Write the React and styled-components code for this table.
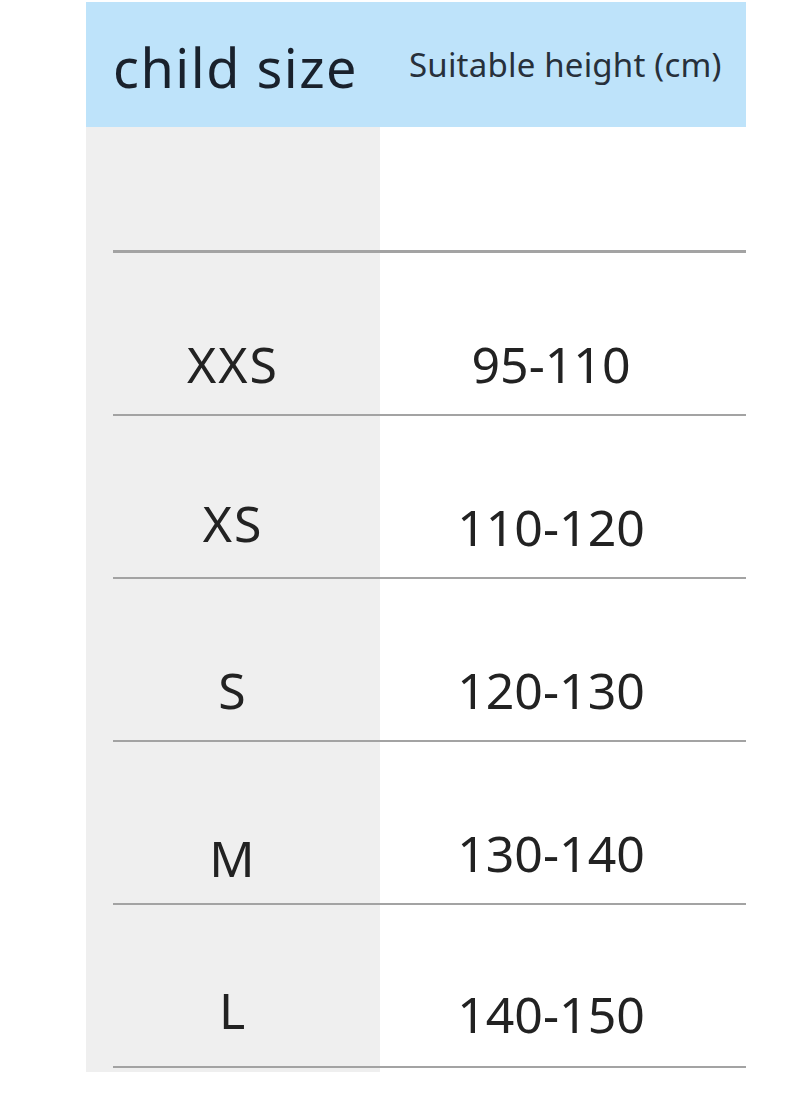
import React from "react"
import styled, { createGlobalStyle } from "styled-components"

const GlobalStyle = createGlobalStyle`
  html, body {
    margin: 0;
    padding: 0;
    background: #ffffff;
  }
  body {
    font-family: "Noto Sans", "Open Sans", sans-serif;
  }
`

const Page = styled.div`
  width: 798px;
  min-height: 1093px;
  padding-top: 2px;
  box-sizing: border-box;
`

const Table = styled.div`
  margin-left: 86px;
  width: 660px;
`

const Header = styled.div`
  display: grid;
  grid-template-columns: 294px 366px;
  height: 125px;
  background-color: #bee3fa;
`

const HeadCell = styled.div`
  display: flex;
  align-items: center;
  padding-left: ${props => props.$indent}px;
  padding-top: ${props => props.$drop}px;
  font-size: ${props => props.$size}px;
  color: ${props => props.$color};
  letter-spacing: ${props => props.$spacing || 0}px;
  white-space: nowrap;
`

const Body = styled.div`
  background: linear-gradient(to right, #efefef 294px, #ffffff 294px);
  padding-bottom: 4px;
`

const Row = styled.div`
  display: grid;
  grid-template-columns: 267px 366px;
  margin-left: 27px;
  height: ${props => props.$height}px;
  border-bottom: ${props => props.$line}px solid #a3a3a3;
  box-sizing: border-box;
`

const Cell = styled.div`
  display: flex;
  align-items: flex-end;
  justify-content: center;
  padding-right: ${props => props.$shift}px;
  padding-bottom: ${props => props.$bottom}px;
  font-size: 50px;
  line-height: 1;
  letter-spacing: ${props => props.$spacing || 0}px;
  color: #222222;
`

const sizes = [
  { label: "XXS", range: "95-110", low: 25, high: 25 },
  { label: "XS", range: "110-120", low: 29, high: 25 },
  { label: "S", range: "120-130", low: 25, high: 25 },
  { label: "M", range: "130-140", low: 20, high: 25 },
  { label: "L", range: "140-150", low: 31, high: 27 },
]

const App = () => {
  return (
    <>
      <GlobalStyle />
      <Page>
        <Table>
          <Header>
            <HeadCell
              $indent={27}
              $drop={4}
              $size={54}
              $spacing={1.5}
              $color="#19212c"
            >
              child size
            </HeadCell>
            <HeadCell
              $indent={29}
              $drop={0}
              $size={33}
              $spacing={0.2}
              $color="#27303b"
            >
              Suitable height (cm)
            </HeadCell>
          </Header>
          <Body>
            <Row $height={126} $line={3} />
            {sizes.map(size => (
              <Row key={size.label} $height={163} $line={2}>
                <Cell $shift={27} $bottom={size.low} $spacing={2}>
                  {size.label}
                </Cell>
                <Cell $shift={24} $bottom={size.high}>
                  {size.range}
                </Cell>
              </Row>
            ))}
          </Body>
        </Table>
      </Page>
    </>
  )
}

export default App
